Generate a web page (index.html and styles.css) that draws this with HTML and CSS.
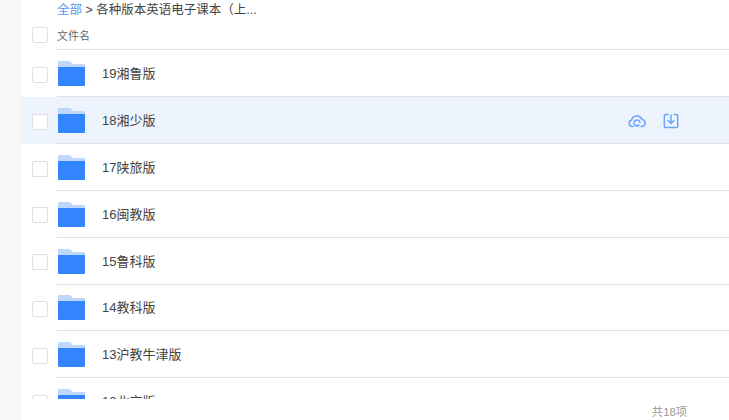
FILE: index.html
```html
<!DOCTYPE html>
<html lang="zh-CN">
<head>
  <meta charset="UTF-8" />
  <title>文件列表</title>
  <link rel="stylesheet" href="styles.css">
</head>
<body>
  <svg class="defs" width="0" height="0">
    <symbol id="folder" viewBox="0 0 27 25">
      <path fill="#bfd7fb" d="M1 0h11l3 3h11a1 1 0 0 1 1 1v4H0V1a1 1 0 0 1 1-1z"/>
      <path fill="#3385ff" d="M0 6h27v18a1 1 0 0 1-1 1H1a1 1 0 0 1-1-1z"/>
    </symbol>
  </svg>
  <aside class="sidebar"></aside>
  <main class="main">
    <div class="crumbs"><a href="#">全部</a> &gt; 各种版本英语电子课本（上...</div>
    <div class="head">
      <span class="check"></span>
      <span class="head-name">文件名</span>
    </div>
    <div class="list">
      <div class="row">
        <span class="check"></span>
        <svg class="folder"><use href="#folder"/></svg>
        <span class="name">19湘鲁版</span>
      </div>
      <div class="row active">
        <span class="check"></span>
        <svg class="folder"><use href="#folder"/></svg>
        <span class="name">18湘少版</span>
        <div class="actions">
          <svg class="icon" viewBox="0 0 18 18" fill="none" stroke="#6ea4fb" stroke-width="1.5" stroke-linecap="round" stroke-linejoin="round">
            <path d="M5 14.500H4.200a3.200 3.200 0 0 1-.7-6.300A5.600 5.600 0 0 1 14 7.400a3.600 3.600 0 0 1 .2 7.100H13"/>
            <path d="M12 10.500a3 3 0 1 0-1 2.800H9"/>
          </svg>
          <svg class="icon" viewBox="0 0 18 18" fill="none" stroke="#6ea4fb" stroke-width="1.5" stroke-linecap="round" stroke-linejoin="round">
            <path d="M6 2.500H3.500a1.200 1.200 0 0 0-1.200 1.200v10.600a1.200 1.200 0 0 0 1.200 1.200h11a1.200 1.200 0 0 0 1.200-1.200V3.700a1.200 1.200 0 0 0-1.200-1.200H12"/>
            <path d="M9 3v8M6 8.500l3 3 3-3"/>
          </svg>
        </div>
      </div>
      <div class="row">
        <span class="check"></span>
        <svg class="folder"><use href="#folder"/></svg>
        <span class="name">17陕旅版</span>
      </div>
      <div class="row">
        <span class="check"></span>
        <svg class="folder"><use href="#folder"/></svg>
        <span class="name">16闽教版</span>
      </div>
      <div class="row">
        <span class="check"></span>
        <svg class="folder"><use href="#folder"/></svg>
        <span class="name">15鲁科版</span>
      </div>
      <div class="row">
        <span class="check"></span>
        <svg class="folder"><use href="#folder"/></svg>
        <span class="name">14教科版</span>
      </div>
      <div class="row">
        <span class="check"></span>
        <svg class="folder"><use href="#folder"/></svg>
        <span class="name">13沪教牛津版</span>
      </div>
      <div class="row">
        <span class="check"></span>
        <svg class="folder"><use href="#folder"/></svg>
        <span class="name">12北京版</span>
      </div>
    </div>
    <div class="total">共18项</div>
  </main>
</body>
</html>
```

FILE: styles.css
```css
* {
  margin: 0;
  padding: 0;
  box-sizing: border-box;
}

html,
body {
  height: 100%;
  overflow: hidden;
}

body {
  display: flex;
  background: #fff;
  color: #444;
  font-family: 'Liberation Sans', 'Noto Sans CJK SC', sans-serif;
}

.defs {
  position: absolute;
}

.sidebar {
  width: 21px;
  flex-shrink: 0;
  background: #f7f7f7;
}

.main {
  flex: 1;
  min-width: 0;
  display: flex;
  flex-direction: column;
}

.crumbs {
  height: 21px;
  padding-left: 36px;
  font-size: 12.5px;
  line-height: 18px;
  padding-top: 1px;
  color: #444;
}

.crumbs a {
  color: #5b93f5;
  text-decoration: none;
}

.head {
  display: flex;
  align-items: center;
  height: 29.6px;
  padding-bottom: 1.6px;
  padding-left: 11px;
  position: relative;
}

.head::after {
  content: "";
  position: absolute;
  left: 36px;
  right: 0;
  bottom: 1px;
  height: 1px;
  background: #e0e0e0;
}

.head-name {
  margin-left: 9px;
  font-size: 11px;
  color: #666;
}

.check {
  width: 16px;
  height: 16px;
  flex-shrink: 0;
  background: #fff;
  border: 1px solid #e0e0e0;
  border-radius: 2px;
}

.list {
  height: 348px;
  overflow: hidden;
}

.row {
  display: flex;
  align-items: center;
  height: 46.8px;
  padding-left: 11px;
  position: relative;
}

.row::after {
  content: "";
  position: absolute;
  left: 36px;
  right: 0;
  bottom: 0;
  height: 1px;
  background: #e0e0e0;
}

.row .check {
  margin-top: 2px;
}

.row.active {
  background: #edf4fe;
}

.folder {
  width: 27px;
  height: 25px;
  margin-left: 10px;
  flex-shrink: 0;
}

.name {
  margin-left: 17px;
  margin-bottom: 2px;
  font-size: 13px;
  color: #444;
}

.actions {
  display: flex;
  gap: 16px;
  margin-left: auto;
  margin-right: 49px;
  margin-top: 1px;
}

.icon {
  width: 18px;
  height: 18px;
}

.total {
  margin-top: 4px;
  padding-right: 42px;
  text-align: right;
  font-size: 11.3px;
  color: #999;
}
```
